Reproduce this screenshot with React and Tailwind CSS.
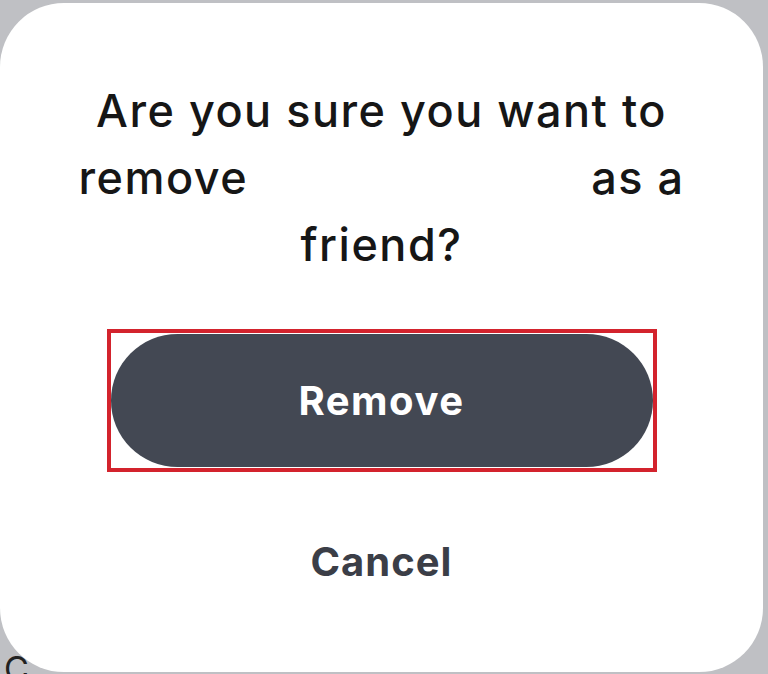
export default function App() {
  const font = { fontFamily: '"Inter", "Noto Sans", sans-serif' };
  return (
    <div className="relative w-[768px] h-[674px] overflow-hidden bg-[#bfc0c4]" style={font}>
      <span className="absolute left-[4px] top-[652px] text-[34px] leading-none text-[#222]">C</span>
      <div className="relative pt-[3px] pr-[5px]">
        <div className="w-[763px] h-[669px] bg-white rounded-[64px] flex flex-col items-center">
          <div className="mt-[74px] flex flex-col items-center text-[45px] leading-[67px] font-medium tracking-[1.5px] text-[#161616]">
            <div>Are you sure you want to</div>
            <div className="flex w-[606px] justify-between">
              <span>remove</span>
              <span>as a</span>
            </div>
            <div>friend?</div>
          </div>
          <div className="mt-[51px] w-[550px] h-[143px] border-4 border-[#d3232d] flex items-center">
            <button className="w-[542px] h-[133px] rounded-full bg-[#434853] text-white text-[40px] font-bold tracking-[1.5px]">
              Remove
            </button>
          </div>
          <div className="mt-[60px] text-[40px] font-bold tracking-[1px] text-[#3b3e47]">Cancel</div>
        </div>
      </div>
    </div>
  );
}
